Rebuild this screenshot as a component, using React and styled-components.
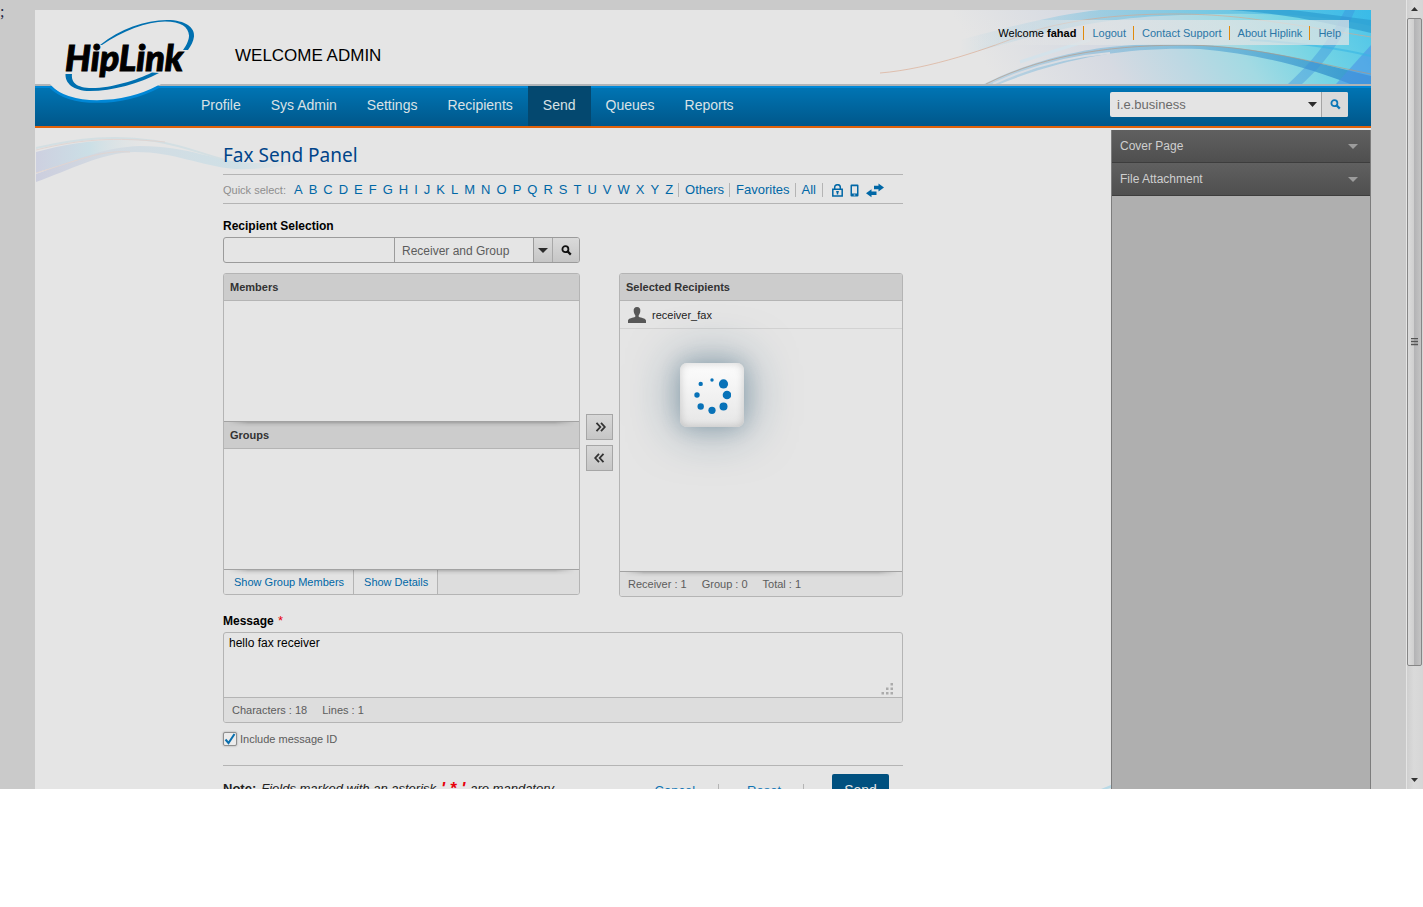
import React from "react";
import styled, { createGlobalStyle, css } from "styled-components";

const c = {
  page: "#e5e5e5",
  link: "#0067a6",
  line: "#b4b4b4",
  text: "#5c5c5c",
};

const GlobalStyle = createGlobalStyle`
  * { box-sizing: border-box; }
  body { margin: 0; background: #fff; font-family: "Liberation Sans", Arial, sans-serif; color: #000; }
  button, input, select, textarea { font-family: inherit; margin: 0; border-radius: 0; }
  a { text-decoration: none; }
  svg { display: block; }
`;

const Viewport = styled.div`
  display: flex;
  height: calc(100vh - 118px);
  overflow: hidden;
  background: #cacaca;
`;

const Stage = styled.div`
  position: relative;
  flex: 1;
  min-width: 0;
  padding: 10px 35px 0;
`;

const Stray = styled.span`
  position: absolute;
  left: 0;
  top: 3px;
  font: 16px/18px "Liberation Serif", serif;
  color: #1c2340;
`;

const Page = styled.div`
  position: relative;
  display: flex;
  flex-direction: column;
  height: 100%;
  background: ${c.page};
`;

/* Header */
const Header = styled.header`
  position: relative;
  display: flex;
  justify-content: space-between;
  align-items: flex-start;
  height: 76px;
  flex: none;
  border-bottom: 2px solid #b0b4b7;
`;

const HeaderArt = styled.svg`
  position: absolute;
  right: 0;
  top: 0;
`;

const SiteTitle = styled.div`
  padding: 35px 0 0 200px;
  font-size: 17px;
  line-height: 22px;
`;

const UserBar = styled.div`
  position: relative;
  display: flex;
  align-items: center;
  height: 25px;
  margin: 10px 22px 0 0;
  padding: 0 1px 0 40px;
  font-size: 11px;
  background: linear-gradient(90deg, rgba(229, 229, 229, 0), rgba(226, 228, 229, 0.72) 35%);
`;

const UserLink = styled.a`
  padding: 0 7px 0 8px;
  border-left: 1px solid #e08a0c;
  line-height: 14px;
  color: #2a76a6;
`;

const UserName = styled.span`
  margin-right: 7px;
`;

const Logo = styled.svg`
  position: absolute;
  left: 0;
  top: 0;
  z-index: 2;
`;

/* Navigation */
const Nav = styled.nav`
  display: flex;
  justify-content: space-between;
  align-items: flex-start;
  flex: none;
  height: 42px;
  padding: 0 23px 0 151px;
  border-bottom: 2px solid #e2620a;
  background: linear-gradient(#0087d6 2px, #0074b3 2px, #00578a 40px);
`;

const Tabs = styled.div`
  display: flex;
`;

const Tab = styled.a`
  height: 40px;
  padding: 0 15px;
  font-size: 14px;
  line-height: 38px;
  color: #d9e2e6;
  background: ${(p) => (p.$active ? "#04486f" : "transparent")};
`;

const SiteSearch = styled.form`
  display: flex;
  width: 238px;
  height: 25px;
  margin-top: 6px;
  border-radius: 2px;
  overflow: hidden;
  background: #e4e4e4;
`;

const SiteInput = styled.input`
  flex: 1;
  min-width: 0;
  padding: 0 7px;
  border: 0;
  font-size: 13px;
  background: transparent;
  color: #6a6a6a;
`;

const PlainButton = styled.button`
  display: flex;
  align-items: center;
  justify-content: center;
  width: ${(p) => p.$w}px;
  padding: 0;
  border: 0;
  background: transparent;
  ${(p) => p.$divided && css`
    border-left: 1px solid #a4a4a4;
    background: #dadada;
  `}
`;

/* Body */
const Body = styled.div`
  position: relative;
  display: flex;
  flex: 1;
  min-height: 0;
  overflow: hidden;
`;

const Wave = styled.svg`
  position: absolute;
  left: 1px;
  top: 6px;
`;

const CornerWave = styled.svg`
  position: absolute;
  right: 260px;
  bottom: 0;
`;

const Main = styled.main`
  position: relative;
  flex: 1;
  min-width: 0;
  padding: 15px 208px 0 188px;
`;

const PanelTitle = styled.h1`
  margin: 0;
  font: 400 19px/24px "Noto Sans", "Open Sans", sans-serif;
  color: #004489;
`;

const QuickSelect = styled.div`
  display: flex;
  align-items: center;
  height: 30px;
  margin-top: 7px;
  padding-top: 2px;
  border: solid ${c.line};
  border-width: 1px 0;
  font-size: 13px;
  line-height: 14px;
  white-space: nowrap;
`;

const QuickLabel = styled.span`
  margin-right: 8px;
  font-size: 11px;
  color: #8e8e8e;
`;

const Letters = styled.div`
  display: flex;
  gap: 6px;
  margin-right: 5px;
`;

const Link = styled.a`
  color: ${c.link};
`;

const QuickLink = styled(Link)`
  padding: 0 5px 0 6px;
  border-left: 1px solid ${c.line};
`;

const QuickIcons = styled.div`
  display: flex;
  align-items: center;
  gap: 7px;
  height: 14px;
  margin-left: 1px;
  padding-left: 9px;
  border-left: 1px solid ${c.line};
`;

const FieldLabel = styled.label`
  display: block;
  margin: ${(p) => p.$top}px 0 3px;
  font-size: 12px;
  font-weight: 700;
  line-height: 16px;
`;

const Star = styled.span`
  margin-left: 1px;
  font-size: 13px;
  font-weight: 400;
  color: #e8000b;
`;

const FindRow = styled.div`
  display: flex;
  width: 357px;
  height: 26px;
  border: 1px solid #9b9b9b;
  border-radius: 3px;
  overflow: hidden;
`;

const FindInput = styled.input`
  width: 170px;
  padding: 0 6px;
  border: 0;
  background: transparent;
  font-size: 12px;
`;

const SelectBox = styled.div`
  position: relative;
  flex: 1;
  display: flex;
  border-left: 1px solid #9b9b9b;
`;

const Select = styled.select`
  flex: 1;
  appearance: none;
  padding: 2px 7px 0;
  border: 0;
  background: transparent;
  font-size: 12px;
  color: ${c.text};
`;

const SelectCaret = styled.span`
  position: absolute;
  right: 0;
  top: 0;
  bottom: 0;
  display: flex;
  align-items: center;
  justify-content: center;
  width: 19px;
  border-left: 1px solid #9b9b9b;
  background: linear-gradient(#dadada, #c6c6c6);
  pointer-events: none;
`;

const FindButton = styled(PlainButton)`
  border-left: 1px solid #a8a8a8;
  background: linear-gradient(#dadada, #c6c6c6);
`;

const Panels = styled.div`
  display: flex;
  align-items: flex-start;
  margin-top: 10px;
`;

const Panel = styled.section`
  width: ${(p) => p.$w}px;
  border: 1px solid ${c.line};
  border-radius: 3px;
  overflow: hidden;
`;

const PanelHead = styled.h2`
  position: relative;
  margin: 0;
  height: 27px;
  padding: 0 6px;
  border-bottom: 1px solid ${c.line};
  background: #cccccc;
  font-size: 11px;
  font-weight: 700;
  line-height: 27px;
  color: #333;
`;

const PanelBody = styled.div`
  height: ${(p) => p.$h}px;
  border-bottom: 1px solid #a2a2a2;
`;

const Shade = styled.span`
  position: absolute;
  left: 4px;
  right: 4px;
  top: 0;
  height: 5px;
  background: linear-gradient(rgba(0, 0, 0, 0.2), rgba(0, 0, 0, 0.06) 50%, transparent);
  mask-image: linear-gradient(90deg, transparent, #000 20px, #000 calc(100% - 20px), transparent);
  pointer-events: none;
`;

const PanelFoot = styled.div`
  position: relative;
  display: flex;
  height: 24px;
  padding: 0 ${(p) => p.$pad || 0}px;
  gap: ${(p) => p.$gap || 0}px;
  background: #dddddd;
  font-size: 11px;
  line-height: 24px;
  color: ${c.text};
`;

const FootButton = styled.button`
  padding: 0 9px 0 10px;
  border: 0;
  border-right: 1px solid ${c.line};
  background: #e3e3e3;
  font-size: 11px;
  color: ${c.link};
`;

const Movers = styled.div`
  display: flex;
  flex-direction: column;
  gap: 5px;
  width: 39px;
  padding: 141px 6px 0;
`;

const MoveButton = styled.button`
  display: flex;
  align-items: center;
  justify-content: center;
  height: 26px;
  padding: 0;
  border: 1px solid #a6a6a6;
  background: linear-gradient(#d8d8d8, #c6c6c6);
`;

const Recipient = styled.div`
  display: flex;
  align-items: center;
  gap: 6px;
  height: 28px;
  padding: 0 8px;
  border-bottom: 1px solid #d2d2d2;
  font-size: 11px;
  color: #222;
`;

const Spinner = styled.div`
  display: flex;
  align-items: center;
  justify-content: center;
  width: 64px;
  height: 64px;
  margin: 34px 0 0 60px;
  border-radius: 7px;
  background: linear-gradient(#fdfdfd, #e6e6e6);
  box-shadow: 0 0 50px rgba(20, 70, 100, 0.5), 0 0 20px rgba(20, 70, 100, 0.2),
    inset 0 0 8px rgba(0, 0, 0, 0.18);
`;

const MessageBox = styled.div`
  position: relative;
  border: 1px solid ${c.line};
  border-radius: 3px;
  overflow: hidden;
`;

const MessageArea = styled.textarea`
  display: block;
  width: 100%;
  height: 65px;
  padding: 2px 5px;
  border: 0;
  border-bottom: 1px solid ${c.line};
  resize: none;
  background: transparent;
  font-size: 12px;
  line-height: 16px;
`;

const Grip = styled.svg`
  position: absolute;
  right: 8px;
  top: 50px;
`;

const CheckRow = styled.label`
  display: flex;
  align-items: center;
  gap: 3px;
  height: 16px;
  margin-top: 8px;
  font-size: 11px;
  color: ${c.text};
`;

const CheckHolder = styled.span`
  position: relative;
  display: block;
  width: 14px;
  height: 14px;
  svg { position: absolute; left: 1px; top: 0; pointer-events: none; }
`;

const Check = styled.input`
  display: block;
  appearance: none;
  width: 14px;
  height: 14px;
  border: 1px solid #8f8f8f;
  border-radius: 2px;
  background: #ececec;
  box-shadow: 0 0 2px #999;
`;

const Actions = styled.footer`
  display: flex;
  align-items: flex-start;
  margin-top: 18px;
  padding: 8px 14px 0 0;
  border-top: 1px solid ${c.line};
  font-size: 13px;
  line-height: 30px;
  white-space: nowrap;
`;

const Note = styled.p`
  display: flex;
  align-items: center;
  gap: 5px;
  flex: 1;
  margin: 0;
  font-style: italic;
  color: #222;
  b { font-style: normal; }
`;

const NoteStar = styled.strong`
  font-size: 17px;
  color: #e8000b;
`;

const TextButton = styled.button`
  height: 14px;
  margin-top: 10px;
  padding: 0 ${(p) => p.$right}px 0 ${(p) => p.$left}px;
  border: 0;
  border-right: 1px solid ${c.line};
  background: transparent;
  font-size: 13px;
  line-height: 14px;
  color: #0d74b4;
`;

const SendButton = styled.button`
  width: 57px;
  height: 32px;
  margin-left: 28px;
  padding: 0;
  border: 0;
  border-radius: 2px;
  background: #00507f;
  font-size: 14px;
  color: #e5e5e5;
`;

/* Side panel */
const Side = styled.aside`
  flex: none;
  width: 260px;
  margin-top: 2px;
  border: solid #7d7d7d;
  border-width: 0 1px;
  background: #afafaf;
`;

const SideRow = styled.button`
  display: flex;
  align-items: center;
  justify-content: space-between;
  width: 100%;
  height: 33px;
  padding: 0 12px 0 8px;
  border: 0;
  border-bottom: 1px solid #3d3d3d;
  background: linear-gradient(#606060, #4f4f4f);
  font-size: 12px;
  color: #cfcfcf;
`;

/* Scroll bar */
const ScrollBar = styled.div`
  display: flex;
  flex-direction: column;
  width: 17px;
  padding: 0 1px;
  background: linear-gradient(90deg, #e4e4e4 1px, #cfcfcf 1px, #dadada 8px, #d6d6d6);
`;

const ScrollArrow = styled.span`
  display: flex;
  align-items: center;
  justify-content: center;
  height: 18px;
`;

const Track = styled.div`
  flex: 1;
`;

const Thumb = styled.div`
  display: flex;
  align-items: center;
  justify-content: center;
  height: 86%;
  border: 1px solid #868686;
  border-radius: 2px;
  background: linear-gradient(90deg, #dcdcdc, #cfcfcf 45%, #b4b4b6 50%, #c4c4c4);
`;

const Caret = ({ w = 9, fill = "#2b2b2b" }) => (
  <svg width={w} height="5" viewBox="0 0 10 5" preserveAspectRatio="none" aria-hidden="true">
    <path d="M0 0h10L5 5z" fill={fill} />
  </svg>
);

const Lens = ({ color }) => (
  <svg width="11" height="11" viewBox="0 0 11 11" fill="none" stroke={color} aria-hidden="true">
    <circle cx="4.4" cy="4.2" r="3" strokeWidth="1.8" />
    <path d="M6.6 6.4l3.2 3.2" strokeWidth="2.2" />
  </svg>
);

const Chevrons = ({ left }) => (
  <svg width="12" height="10" viewBox="0 0 12 10" fill="none" stroke="#333" strokeWidth="1.8" aria-hidden="true">
    <path d={left ? "M5 .8L1.2 5L5 9.2M9.500 .8L5.700 5l3.800 4.200" : "M2.500 .8L6.300 5L2.500 9.200M7 .8L10.800 5L7 9.200"} />
  </svg>
);

const dots = [
  [19, 4, 1.7], [30.5, 7.9, 4.6], [34, 19, 4.3], [30.5, 30.5, 4],
  [19, 34.3, 3.6], [7.7, 30.5, 3.2], [4, 19, 2.7], [7.7, 7.9, 2.2],
];

const userLinks = ["Logout", "Contact Support", "About Hiplink", "Help"];

const tabs = ["Profile", "Sys Admin", "Settings", "Recipients", "Send", "Queues", "Reports"];

export default function App() {
  return (
    <>
      <GlobalStyle />
      <Viewport>
        <Stage>
          <Stray>;</Stray>
          <Page>
            <Logo width="170" height="96" viewBox="35 10 170 96" role="img" aria-label="HipLink">
              <path d="M50 84C61 98 78 102 97 102C122 102 144 95 161 84z" fill={c.page} />
              <path d="M50 86.5C61 97.5 78 101.5 97 101.5C121 101.5 142 95.5 159 86.5" fill="none" stroke="#0087d6" strokeWidth="2.6" />
              <path d="M100 45C120 29 145 20 167 20C186 20 195 28 194 36.5C193.500 41 191 46 188 50H183C187.500 44 189 39 189 35.500C188.500 27 181 21.500 165 21.500C147 21.500 122 31 102 45z" fill="#0070b0" />
              <path d="M65.500 74H72C71 82 76 88 92 88C112 88 137 80 152 72.500L159 73C140 83.500 112 91 90 91C73 91 65 83 65.500 74z" fill="#0070b0" />
              <text x="65" y="71" fontFamily="Lato, sans-serif" fontWeight="900" fontStyle="italic" fontSize="36" stroke="#000" strokeWidth="1">HipLink</text>
            </Logo>
            <Header>
              <HeaderArt width="491" height="74" viewBox="880 10 491 74" aria-hidden="true">
                <defs>
                  <linearGradient id="sky" x1="0" x2="1" y1="0.1" y2="0">
                    <stop offset="0.15" stopColor="#e5e5e5" />
                    <stop offset="0.4" stopColor="#d6dae2" />
                    <stop offset="0.55" stopColor="#bdd8e3" />
                    <stop offset="0.68" stopColor="#a3dae3" />
                    <stop offset="0.82" stopColor="#77d5e4" />
                    <stop offset="1" stopColor="#4cc4e9" />
                  </linearGradient>
                  <linearGradient id="fadeBlue" x1="0" x2="1">
                    <stop offset="0" stopColor="#7db9dc" stopOpacity="0.4" />
                    <stop offset="0.5" stopColor="#63aed6" stopOpacity="0.6" />
                    <stop offset="1" stopColor="#2f92cc" stopOpacity="0.9" />
                  </linearGradient>
                  <linearGradient id="fadeTop" x1="0" x2="1">
                    <stop offset="0" stopColor="#7fc6e4" stopOpacity="0" />
                    <stop offset="0.35" stopColor="#7cc4e0" stopOpacity="0.6" />
                    <stop offset="1" stopColor="#35b9e8" stopOpacity="0.8" />
                  </linearGradient>
                </defs>
                <path d="M880 10H1371V84H880z" fill="url(#sky)" />
                <path d="M960 40C1020 24 1060 14 1100 10H1371V26C1310 12 1240 12 1160 16C1080 20 1020 40 960 56z" fill="url(#fadeTop)" />
                <path d="M1230 10C1290 14 1330 24 1371 33V20C1340 16 1310 12 1290 10z" fill="#2d9fd2" opacity="0.75" />
                <path d="M984 84C1030 61 1080 50 1110 47C1150 43 1190 44 1227 47C1280 52 1330 66 1371 76V84H1350C1310 68 1260 54 1200 49C1130 47 1070 56 1000 84z" fill="url(#fadeBlue)" />
                <path d="M993 84C1035 64 1075 56 1110 53" fill="none" stroke="#d9dde3" strokeWidth="2" />
                <path d="M1020 62C1050 52 1070 46 1090 40" fill="none" stroke="#d4e2ea" strokeWidth="3" />
                <path d="M1288 84C1310 64 1330 40 1345 10H1355C1342 42 1320 68 1302 84z" fill="#3d8edb" opacity="0.4" />
                <path d="M1336 84L1371 45V84z" fill="#4b93e6" opacity="0.6" />
                <path d="M1371 56C1330 46 1290 42 1250 40" fill="none" stroke="#37b6e4" strokeWidth="2" opacity="0.6" />
                <path d="M880 73C930 69 990 48 1027 33C1060 22 1110 14 1173 14C1210 14 1240 17 1260 20C1300 25 1340 32 1371 37" fill="none" stroke="#dba588" opacity="0.6" />
                <path d="M986 84C1050 52 1120 45 1190 45C1260 47 1310 62 1371 74" fill="none" stroke="#b9957c" opacity="0.6" />
              </HeaderArt>
              <SiteTitle>WELCOME ADMIN</SiteTitle>
              <UserBar>
                <UserName>Welcome <b>fahad</b></UserName>
                {userLinks.map((name) => (
                  <UserLink key={name} href="#">{name}</UserLink>
                ))}
              </UserBar>
            </Header>
            <Nav>
              <Tabs>
                {tabs.map((t) => (
                  <Tab key={t} href="#" $active={t === "Send"}>{t}</Tab>
                ))}
              </Tabs>
              <SiteSearch>
                <SiteInput aria-label="Search" defaultValue="i.e.business" />
                <PlainButton type="button" $w={18} aria-label="Search options"><Caret /></PlainButton>
                <PlainButton type="button" $w={27} $divided aria-label="Search"><Lens color="#0d78b8" /></PlainButton>
              </SiteSearch>
            </Nav>
            <Body>
              <Wave width="290" height="50" viewBox="36 134 290 50" aria-hidden="true">
                <defs>
                  <linearGradient id="w1" x1="0" x2="1">
                    <stop offset="0" stopColor="#cdd0e0" />
                    <stop offset="0.45" stopColor="#cbdfe6" />
                    <stop offset="1" stopColor="#e5e5e5" stopOpacity="0" />
                  </linearGradient>
                  <linearGradient id="w2" x1="0" x2="1">
                    <stop offset="0" stopColor="#cccede" />
                    <stop offset="0.25" stopColor="#d3dbe2" />
                    <stop offset="0.7" stopColor="#cfe0e6" />
                    <stop offset="1" stopColor="#e5e5e5" stopOpacity="0" />
                  </linearGradient>
                </defs>
                <path d="M36 152C70 143 105 137 155 141C125 148 75 160 36 173z" fill="url(#w1)" />
                <path d="M36 174C75 160 105 147 140 146C190 146 215 162 255 163C280 163 300 162 325 160C290 165 260 170 235 169C200 166 175 152 135 152C100 153 70 170 36 182z" fill="url(#w2)" />
                <path d="M36 148C80 138 115 135 155 141C185 146 205 155 226 160" fill="none" stroke="#d3dfe3" strokeWidth="2" />
                <path d="M36 150C80 139 115 137 165 142M36 173C80 160 100 150 130 152" fill="none" stroke="#e0d5d2" />
              </Wave>
              <CornerWave width="10" height="4" viewBox="0 0 10 4" aria-hidden="true">
                <path d="M0 4L10 0V3L6 4z" fill="#b8d9e6" />
              </CornerWave>
              <Main>
                <PanelTitle>Fax Send Panel</PanelTitle>
                <QuickSelect>
                  <QuickLabel>Quick select:</QuickLabel>
                  <Letters>
                    {"ABCDEFGHIJKLMNOPQRSTUVWXYZ".split("").map((l) => (
                      <Link key={l} href="#">{l}</Link>
                    ))}
                  </Letters>
                  <QuickLink href="#">Others</QuickLink>
                  <QuickLink href="#">Favorites</QuickLink>
                  <QuickLink href="#">All</QuickLink>
                  <QuickIcons>
                    <svg width="11" height="13" viewBox="0 0 11 13" fill="none" stroke={c.link} strokeWidth="1.5" aria-hidden="true">
                      <path d="M2.7 5V3.2a2.8 2.5 0 0 1 5.6 0V5M.8 5.2h9.4v6.8H.8z" />
                      <path d="M5.5 7v3.5M4.2 7.8h2.6" />
                    </svg>
                    <svg width="9" height="13" viewBox="0 0 9 13" aria-hidden="true">
                      <path d="M.5 1.500q0-1 1-1h6q1 0 1 1v10q0 1-1 1h-6q-1 0-1-1zM2 2.200v7.300h5V2.200zM3.700 10.400v1.200h1.600v-1.200z" fill={c.link} fillRule="evenodd" />
                    </svg>
                    <svg width="18" height="15" viewBox="0 0 18 15" fill={c.link} aria-hidden="true">
                      <path d="M8 2.8h4.500V.5L18 4.500l-5.500 4V6.200H8zM10.500 8.500H5.500V6.300L0 10.300l5.500 4V12h5z" />
                    </svg>
                  </QuickIcons>
                </QuickSelect>

                <FieldLabel htmlFor="find" $top={14}>Recipient Selection</FieldLabel>
                <FindRow>
                  <FindInput id="find" />
                  <SelectBox>
                    <Select aria-label="Recipient type"><option>Receiver and Group</option></Select>
                    <SelectCaret><Caret w={10} /></SelectCaret>
                  </SelectBox>
                  <FindButton type="button" $w={27} aria-label="Find recipient"><Lens color="#111" /></FindButton>
                </FindRow>

                <Panels>
                  <Panel $w={357}>
                    <PanelHead>Members</PanelHead>
                    <PanelBody $h={121} />
                    <PanelHead><Shade />Groups</PanelHead>
                    <PanelBody $h={121} />
                    <PanelFoot>
                      <FootButton type="button">Show Group Members</FootButton>
                      <FootButton type="button">Show Details</FootButton>
                      <Shade />
                    </PanelFoot>
                  </Panel>
                  <Movers>
                    <MoveButton type="button" aria-label="Add"><Chevrons /></MoveButton>
                    <MoveButton type="button" aria-label="Remove"><Chevrons left /></MoveButton>
                  </Movers>
                  <Panel $w={284}>
                    <PanelHead>Selected Recipients</PanelHead>
                    <PanelBody $h={271}>
                      <Recipient>
                        <svg width="18" height="16" viewBox="0 0 18 16" fill="#575757" aria-hidden="true">
                          <path d="M9 0C11.500 0 12.600 1.800 12.300 4.300C12.100 6 11.500 7.300 10.700 8.200V9.800C13 11 17.500 11.200 18 13.500V16H0V13.500C.5 11.200 5 11 7.300 9.800V8.200C6.500 7.300 5.900 6 5.700 4.300C5.400 1.800 6.500 0 9 0z" />
                        </svg>
                        receiver_fax
                      </Recipient>
                      <Spinner role="status" aria-label="Loading">
                        <svg width="38" height="38" viewBox="0 0 38 38" fill="#0872b8">
                          {dots.map(([x, y, r]) => <circle key={x + "-" + y} cx={x} cy={y} r={r} />)}
                        </svg>
                      </Spinner>
                    </PanelBody>
                    <PanelFoot $pad={8} $gap={15}>
                      <span>Receiver : 1</span>
                      <span>Group : 0</span>
                      <span>Total : 1</span>
                      <Shade />
                    </PanelFoot>
                  </Panel>
                </Panels>

                <FieldLabel htmlFor="message" $top={16}>Message <Star>*</Star></FieldLabel>
                <MessageBox>
                  <MessageArea id="message" defaultValue="hello fax receiver" />
                  <Grip width="13" height="12" viewBox="0 0 13 12" fill="#ababab" aria-hidden="true">
                    <path d="M9.500 0h2.500v2.500H9.500zM5 4.500h2.500V7H5zM9.500 4.500h2.500V7H9.500zM.5 9H3v2.500H.5zM5 9h2.500v2.500H5zM9.500 9h2.500v2.500H9.500z" />
                  </Grip>
                  <PanelFoot $pad={8} $gap={15}>
                    <span>Characters : 18</span>
                    <span>Lines : 1</span>
                  </PanelFoot>
                </MessageBox>
                <CheckRow>
                  <CheckHolder>
                    <Check type="checkbox" defaultChecked />
                    <svg width="12" height="13" viewBox="0 0 12 13" fill="none" stroke="#0a6fae" strokeWidth="2" aria-hidden="true">
                      <path d="M1.500 7.500L4.500 11L10.500 2" />
                    </svg>
                  </CheckHolder>
                  Include message ID
                </CheckRow>
                <Actions>
                  <Note>
                    <b>Note:</b> Fields marked with an asterisk <NoteStar>' * '</NoteStar> are mandatory.
                  </Note>
                  <TextButton type="button" $left={0} $right={23}>Cancel</TextButton>
                  <TextButton type="button" $left={28} $right={22}>Reset</TextButton>
                  <SendButton type="button">Send</SendButton>
                </Actions>
              </Main>
              <Side>
                <SideRow type="button">Cover Page<Caret w={10} fill="#9c9c9c" /></SideRow>
                <SideRow type="button">File Attachment<Caret w={10} fill="#9c9c9c" /></SideRow>
              </Side>
            </Body>
          </Page>
        </Stage>
        <ScrollBar aria-hidden="true">
          <ScrollArrow>
            <svg width="7" height="4" viewBox="0 0 7 4"><path d="M0 4h7L3.500 0z" fill="#333" /></svg>
          </ScrollArrow>
          <Track>
            <Thumb>
              <svg width="7" height="8" viewBox="0 0 7 8"><path d="M0 .5h7M0 3.500h7M0 6.500h7" stroke="#555" strokeWidth="1.500" /></svg>
            </Thumb>
          </Track>
          <ScrollArrow>
            <svg width="7" height="4" viewBox="0 0 7 4"><path d="M0 0h7L3.500 4z" fill="#333" /></svg>
          </ScrollArrow>
        </ScrollBar>
      </Viewport>
    </>
  );
}
